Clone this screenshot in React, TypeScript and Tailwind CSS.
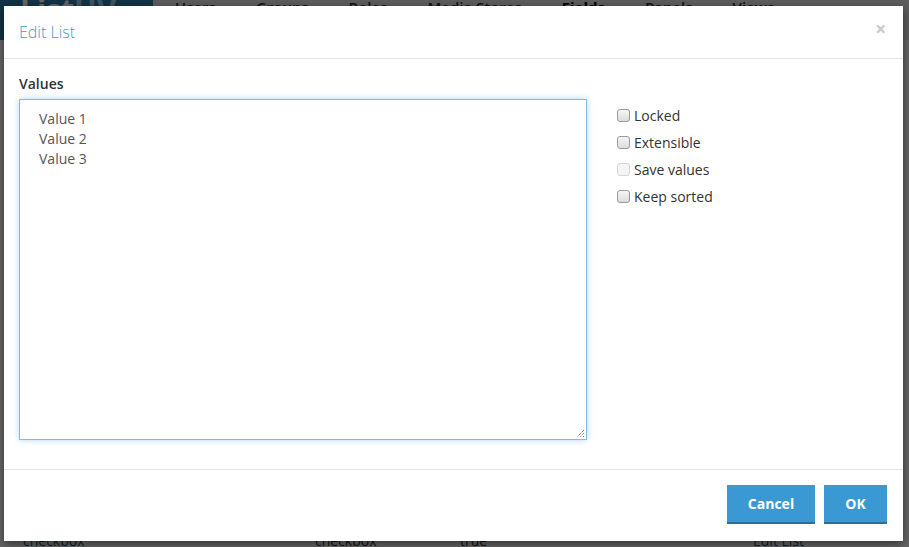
import React from "react";

function Box({ disabled }: { disabled?: boolean }) {
  return (
    <span
      className={
        "inline-block w-[13px] h-[13px] rounded-[3px] border " +
        (disabled
          ? "border-[#d6d6d6] bg-[#f4f4f4]"
          : "border-[#9a9a9a] bg-gradient-to-b from-[#f6f6f6] to-[#dcdcdc]")
      }
    />
  );
}

export default function App() {
  const checks = [
    { label: "Locked" },
    { label: "Extensible" },
    { label: "Save values", disabled: true },
    { label: "Keep sorted" },
  ];
  return (
    <div
      className="relative w-full h-[547px] overflow-hidden bg-white"
      style={{ fontFamily: '"Open Sans", "Liberation Sans", sans-serif' }}
    >
      {/* background page */}
      <div className="flex h-[40px] bg-[#e9e9e9]">
        <div className="w-[153px] bg-[#2f7fb0] text-white text-[30px] font-bold leading-[20px] pl-[20px]">
          List<span className="text-[#9fd3f0]">UV</span>
        </div>
        <div className="flex gap-[40px] pl-[22px] text-[15px] leading-[14px] text-[#333] font-semibold">
          <span>Users</span>
          <span>Groups</span>
          <span>Roles</span>
          <span>Media Stores</span>
          <span className="font-bold text-black">Fields</span>
          <span>Panels</span>
          <span>Views</span>
        </div>
      </div>
      <div className="absolute left-0 right-0 top-[530px] flex text-[14px] text-[#1d4f77]">
        <span className="absolute left-[23px]">checkbox</span>
        <span className="absolute left-[315px] text-[#333]">checkbox</span>
        <span className="absolute left-[460px] text-[#333]">true</span>
        <span className="absolute left-[753px]">Edit List</span>
      </div>

      {/* overlay */}
      <div className="absolute inset-0 bg-[rgba(0,0,0,0.6)]" />

      {/* modal */}
      <div className="absolute left-[4px] top-[6px] w-[899px] h-[535px] bg-white flex flex-col shadow-[0_3px_9px_rgba(0,0,0,0.5)]">
        <div className="h-[53px] flex items-center justify-between pl-[15px] pr-[17px] border-b border-[#e5e5e5] shrink-0">
          <span className="text-[16px] font-light text-[#3c9ad6]">Edit List</span>
          <span className="text-[19px] leading-none text-[#c8c8c8] font-bold -mt-[5px]">×</span>
        </div>
        <div className="flex-1 flex pl-[15px] pt-[15px]">
          <div className="w-[568px]">
            <div className="text-[14px] font-semibold text-[#333] leading-[20px] mb-[5px]">Values</div>
            <div className="relative w-[568px] h-[341px] border border-[#7ebde6] shadow-[0_0_6px_rgba(102,175,233,0.5)] bg-white pl-[19px] pt-[9px] text-[14px] leading-[20px] text-[#555]">
              <div>Value 1</div>
              <div>Value 2</div>
              <div>Value 3</div>
              <svg className="absolute right-[1px] bottom-[1px]" width="9" height="9" viewBox="0 0 9 9">
                <path d="M8 1 L1 8 M8 4 L4 8 M8 7 L7 8" stroke="#555" strokeWidth="1" strokeDasharray="1 1" />
              </svg>
            </div>
          </div>
          <div className="ml-[30px] pt-[31px] flex flex-col gap-[7px]">
            {checks.map((c) => (
              <div key={c.label} className="flex items-center h-[20px] text-[14px] text-[#333]">
                <Box disabled={c.disabled} />
                <span className="ml-[4px]">{c.label}</span>
              </div>
            ))}
          </div>
        </div>
        <div className="h-[72px] border-t border-[#e5e5e5] flex items-center justify-end pr-[16px] gap-[9px] shrink-0">
          <button className="w-[88px] h-[39px] bg-[#3a99d3] border-b-2 border-[#2a6f9e] text-white font-bold text-[14px] -mt-[2px]">
            Cancel
          </button>
          <button className="w-[63px] h-[39px] bg-[#3a99d3] border-b-2 border-[#2a6f9e] text-white font-bold text-[14px] -mt-[2px]">
            OK
          </button>
        </div>
      </div>
    </div>
  );
}
